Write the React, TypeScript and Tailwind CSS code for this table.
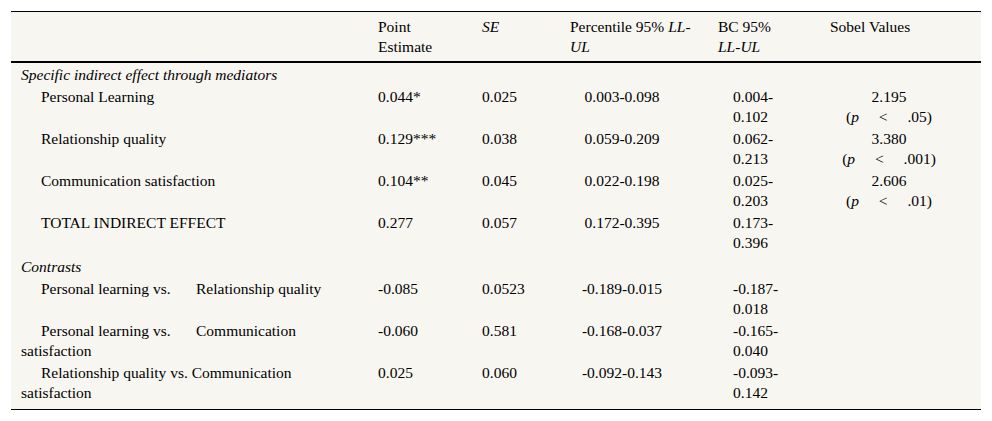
import React from "react";

type Row = {
  label: React.ReactNode;
  point?: string;
  se?: string;
  pct?: string;
  bc?: [string, string];
  sobel?: [string, string];
  section?: boolean;
  last?: boolean;
  tall?: boolean;
};

const rows: Row[] = [
  { label: "Specific indirect effect through mediators", section: true },
  { label: "Personal Learning", point: "0.044*", se: "0.025", pct: "0.003-0.098", bc: ["0.004-", "0.102"], sobel: ["2.195", ".05)"] },
  { label: "Relationship quality", point: "0.129***", se: "0.038", pct: "0.059-0.209", bc: ["0.062-", "0.213"], sobel: ["3.380", ".001)"] },
  { label: "Communication satisfaction", point: "0.104**", se: "0.045", pct: "0.022-0.198", bc: ["0.025-", "0.203"], sobel: ["2.606", ".01)"] },
  { label: "TOTAL INDIRECT EFFECT", point: "0.277", se: "0.057", pct: "0.172-0.395", bc: ["0.173-", "0.396"], tall: true },
  { label: "Contrasts", section: true },
  {
    label: (
      <>
        <span className="inline-block w-[155px]">Personal learning vs.</span>Relationship quality
      </>
    ),
    point: "-0.085",
    se: "0.0523",
    pct: "-0.189-0.015",
    bc: ["-0.187-", "0.018"],
  },
  {
    label: (
      <>
        <span className="inline-block w-[155px]">Personal learning vs.</span>Communication
        <span className="block -ml-5">satisfaction</span>
      </>
    ),
    point: "-0.060",
    se: "0.581",
    pct: "-0.168-0.037",
    bc: ["-0.165-", "0.040"],
  },
  {
    label: (
      <>
        Relationship quality vs. Communication
        <span className="block -ml-5">satisfaction</span>
      </>
    ),
    point: "0.025",
    se: "0.060",
    pct: "-0.092-0.143",
    bc: ["-0.093-", "0.142"],
    last: true,
  },
];

export default function App() {
  return (
    <div className="bg-white w-[992px] h-[421px] pt-[11px] pl-[11px] font-['Liberation_Serif',_'Times_New_Roman',_serif] text-[15.5px] leading-[20px] text-black">
      <table className="w-[970px] table-fixed border-collapse bg-[#f8f6f1]">
        <colgroup>
          <col className="w-[357px]" />
          <col className="w-[104px]" />
          <col className="w-[88px]" />
          <col className="w-[148px]" />
          <col className="w-[112px]" />
          <col className="w-[161px]" />
        </colgroup>
        <thead>
          <tr className="border-t border-b-2 border-black align-top">
            <th className="pl-[10px] pt-[5px] pb-[4px] font-normal text-left"></th>
            <th className="pl-[10px] pt-[5px] pb-[4px] font-normal text-left">
              Point
              <br />
              Estimate
            </th>
            <th className="pl-[10px] pt-[5px] pb-[4px] font-normal text-left italic">SE</th>
            <th className="pl-[10px] pt-[5px] pb-[4px] font-normal text-left">
              Percentile 95% <i>LL-</i>
              <br />
              <i>UL</i>
            </th>
            <th className="pl-[10px] pt-[5px] pb-[4px] font-normal text-left">
              BC 95%
              <br />
              <i>LL-UL</i>
            </th>
            <th className="pl-[10px] pt-[5px] pb-[4px] font-normal text-left">Sobel Values</th>
          </tr>
        </thead>
        <tbody>
          {rows.map((r, i) => {
            const pad = r.last ? "pt-[2px] pb-[6px]" : r.tall ? "pt-[2px] pb-[2px]" : "pt-[2px] pb-0";
            if (r.section) {
              return (
                <tr key={i} className="align-top">
                  <td colSpan={6} className={`pl-[10px] italic ${pad}`}>
                    {r.label}
                  </td>
                </tr>
              );
            }
            return (
              <tr key={i} className={`align-top ${r.last ? "border-b border-black" : ""}`}>
                <td className={`pl-[30px] ${pad}`}>{r.label}</td>
                <td className={`pl-[10px] ${pad}`}>{r.point}</td>
                <td className={`pl-[10px] ${pad}`}>{r.se}</td>
                <td className={`pl-[10px] ${pad}`}>
                  <div className="w-[104px] text-center">{r.pct}</div>
                </td>
                <td className={`pl-[25px] ${pad}`}>
                  {r.bc && (
                    <>
                      <div>{r.bc[0]}</div>
                      <div>{r.bc[1]}</div>
                    </>
                  )}
                </td>
                <td className={`pl-[10px] ${pad}`}>
                  {r.sobel && (
                    <div className="w-[118px] text-center">
                      <div>{r.sobel[0]}</div>
                      <div className="[word-spacing:16px]">
                        (<i>p</i> &lt; {r.sobel[1]}
                      </div>
                    </div>
                  )}
                </td>
              </tr>
            );
          })}
        </tbody>
      </table>
    </div>
  );
}
